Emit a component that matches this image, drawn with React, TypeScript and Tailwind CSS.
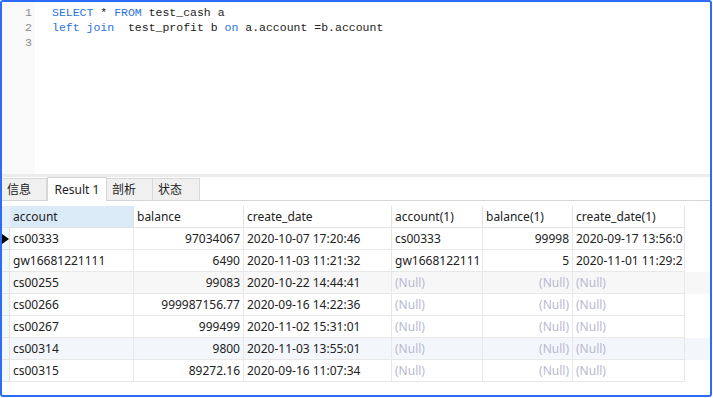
import React from 'react';

const cols = [
  { key: 'account', w: 124, right: false },
  { key: 'balance', w: 110, right: true },
  { key: 'create_date', w: 148, right: false },
  { key: 'account(1)', w: 91, right: false },
  { key: 'balance(1)', w: 90, right: true },
  { key: 'create_date(1)', w: 112, right: false },
];

// last column is cut in the source shot, keep what is visible
const rows: (string | null)[][] = [
  ['cs00333', '97034067', '2020-10-07 17:20:46', 'cs00333', '99998', '2020-09-17 13:56:0'],
  ['gw16681221111', '6490', '2020-11-03 11:21:32', 'gw1668122111', '5', '2020-11-01 11:29:2'],
  ['cs00255', '99083', '2020-10-22 14:44:41', null, null, null],
  ['cs00266', '999987156.77', '2020-09-16 14:22:36', null, null, null],
  ['cs00267', '999499', '2020-11-02 15:31:01', null, null, null],
  ['cs00314', '9800', '2020-11-03 13:55:01', null, null, null],
  ['cs00315', '89272.16', '2020-09-16 11:07:34', null, null, null],
];

const rowBg = ['bg-white', 'bg-white', 'bg-[#f7f7f7]', 'bg-white', 'bg-white', 'bg-[#f3f7fc]', 'bg-white'];

const Kw = ({ children }: { children: React.ReactNode }) => <span className="text-[#2a72e0]">{children}</span>;

const tabs = [
  { label: '信息', w: 'w-[45px]', active: false },
  { label: 'Result 1', w: 'w-[60px]', active: true },
  { label: '剖析', w: 'w-[46px]', active: false },
  { label: '状态', w: 'w-[47px]', active: false },
];

export default function App() {
  return (
    <div className="w-[713px] h-[398px] bg-white overflow-hidden">
      <div className="w-[712px] h-[397px] border-2 border-[#2f6cf5] rounded-[3px] flex flex-col overflow-hidden">
        {/* Editor */}
        <div className="h-[172px] flex shrink-0">
          <div className="w-[33px] bg-[#f9f9f9] pt-[3px] pr-[3px] text-right text-[#8a8a8a] font-['Liberation_Mono',monospace] text-[11.5px] leading-[15px]">
            <div>1</div>
            <div>2</div>
            <div>3</div>
          </div>
          <div className="pl-[17px] pt-[3px] text-[#222] font-['Liberation_Mono',monospace] text-[11.5px] leading-[15px] whitespace-pre">
            <div><Kw>SELECT</Kw> * <Kw>FROM</Kw> test_cash a</div>
            <div><Kw>left join</Kw>  test_profit b <Kw>on</Kw> a.account =b.account</div>
            <div> </div>
          </div>
        </div>
        <div className="h-[3px] bg-[#ececec] shrink-0" />
        {/* Tabs */}
        <div className="h-[24px] flex items-end border-b border-[#d4d4d4] shrink-0 font-['Noto_Sans','Noto_Sans_CJK_SC',sans-serif] text-[12px] text-[#222]">
          {tabs.map((t) =>
            t.active ? (
              <div key={t.label} className={`${t.w} h-[24px] -mb-px bg-white border border-b-0 border-[#d4d4d4] flex items-center justify-center`}>
                {t.label}
              </div>
            ) : (
              <div key={t.label} className={`${t.w} h-[22px] bg-[#f0f0f0] border-r border-t border-[#d8d8d8] flex items-center pl-[5px]`}>
                {t.label}
              </div>
            )
          )}
        </div>
        {/* Grid */}
        <div className="pt-[5px] font-['Noto_Sans','Noto_Sans_CJK_SC',sans-serif] text-[12px] text-[#222]">
          <div className="flex h-[22px]">
            <div className="w-[8px] bg-[#e6f0fa] border-b border-[#e3e3e3]" />
            {cols.map((c, i) => (
              <div
                key={c.key}
                style={{ width: c.w }}
                className={`${i === 0 ? 'bg-[#dbeaf7]' : 'bg-white'} border-r border-b border-[#e3e3e3] px-[3px] flex items-center leading-none`}
              >
                {c.key}
              </div>
            ))}
          </div>
          {rows.map((r, ri) => (
            <div key={ri} className={`flex h-[22px] ${rowBg[ri]}`}>
              <div className="w-[8px] bg-[#f2f7fc] border-b border-r border-[#e3e3e3] flex items-center">
                {ri === 0 && (
                  <svg width="7" height="10" viewBox="0 0 7 10">
                    <path d="M0 0 L7 5 L0 10 Z" fill="#000" />
                  </svg>
                )}
              </div>
              {cols.map((c, ci) => (
                <div
                  key={c.key}
                  style={{ width: c.w }}
                  className={`border-r border-b border-[#e8e8e8] px-[3px] flex items-center whitespace-nowrap ${c.right ? 'justify-end' : ''} ${r[ci] === null ? 'text-[#b9b9cf]' : ''}`}
                >
                  {r[ci] === null ? '(Null)' : r[ci]}
                </div>
              ))}
            </div>
          ))}
        </div>
      </div>
    </div>
  );
}
